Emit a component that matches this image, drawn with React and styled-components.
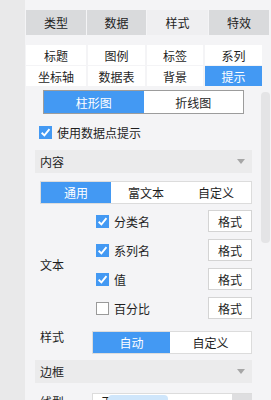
import React from 'react'
import styled, { createGlobalStyle } from 'styled-components'

const Global = createGlobalStyle`
  body {
    margin: 0;
    background: #f4f4f6;
    font-family: "Noto Sans CJK SC", "Microsoft YaHei", sans-serif;
    font-size: 12px;
    color: #1e1e1e;
  }
`

const Page = styled.div`
  display: flex;
  width: 271px;
  height: 400px;
  overflow: hidden;
`

const Strip = styled.div`
  width: 25px;
  flex-shrink: 0;
  background: #e9e9ea;
`

const Panel = styled.div`
  flex: 1;
  display: flex;
  flex-direction: column;
  background: #f4f4f6;
  & > * { flex-shrink: 0; }
`

const MainTabs = styled.div`
  display: grid;
  grid-template-columns: 60px 59px 61px 60px;
  gap: 1px;
  margin: 10px 0 0 1px;
  height: 25px;
`

const MainTab = styled.div`
  display: flex;
  align-items: center;
  justify-content: center;
  background: ${p => (p.active ? '#efeff1' : '#d9dadc')};
  font-size: 12px;
`

const SubTabs = styled.div`
  display: grid;
  grid-template-columns: 60px 57px 56px 57px;
  column-gap: 2px;
  row-gap: 1px;
  margin: 10px 0 0 1px;
  width: 235px;
`

const SubTab = styled.div`
  height: 20px;
  display: flex;
  align-items: center;
  justify-content: center;
  background: ${p => (p.active ? '#4399f3' : '#ffffff')};
  color: ${p => (p.active ? '#ffffff' : '#1e1e1e')};
`

const Body = styled.div`
  display: flex;
  padding-left: 10px;
`

const Content = styled.div`
  width: 217px;
  display: flex;
  flex-direction: column;
  & > * { flex-shrink: 0; }
`

const Scroll = styled.div`
  width: 9px;
  height: 151px;
  margin: 6px 0 0 9px;
  border-radius: 4px;
  background: #e4e4e6;
`

const Seg = styled.div`
  display: flex;
  flex: ${p => (p.grow ? 1 : 'none')};
  height: ${p => p.h || 20}px;
  border: 1px solid ${p => p.border || '#dcdcdc'};
  margin: ${p => p.m || 0};
  background: #fff;
`

const SegItem = styled.div`
  flex: ${p => (p.w ? `0 0 ${p.w}px` : 1)};
  display: flex;
  align-items: center;
  justify-content: center;
  background: ${p => (p.active ? '#4399f3' : '#ffffff')};
  color: ${p => (p.active ? '#ffffff' : '#1e1e1e')};
`

const CheckRow = styled.label`
  display: flex;
  align-items: center;
  gap: 5px;
  margin: ${p => p.m || 0};
  height: 14px;
`

const Box = styled.span`
  width: 13px;
  height: 13px;
  box-sizing: border-box;
  display: inline-flex;
  align-items: center;
  justify-content: center;
  background: ${p => (p.checked ? '#4399f3' : '#ffffff')};
  border: 1px solid ${p => (p.checked ? '#4399f3' : '#9a9a9a')};
`

const Section = styled.div`
  height: 23px;
  display: flex;
  align-items: center;
  justify-content: space-between;
  padding: 0 7px 0 5px;
  background: #ebebec;
  margin: ${p => p.m || 0};
`

const Caret = styled.span`
  width: 0;
  height: 0;
  border-left: 4px solid transparent;
  border-right: 4px solid transparent;
  border-top: 5px solid #a6a6a6;
`

const FormRow = styled.div`
  display: flex;
  align-items: ${p => p.align || 'center'};
  margin: ${p => p.m || 0};
`

const Label = styled.div`
  width: 57px;
  padding-left: 5px;
  box-sizing: border-box;
  flex-shrink: 0;
  line-height: ${p => (p.tight ? '12px' : 'normal')};
`

const Options = styled.div`
  flex: 1;
  display: flex;
  flex-direction: column;
  gap: 7px;
`

const Option = styled.div`
  display: flex;
  align-items: center;
  justify-content: space-between;
  padding-left: 4px;
`

const FmtButton = styled.div`
  width: 44px;
  height: 22px;
  box-sizing: border-box;
  border: 1px solid #d4d4d4;
  background: #fff;
  display: flex;
  align-items: center;
  justify-content: center;
`

const Select = styled.div`
  flex: 1;
  height: 22px;
  display: flex;
  background: #fff;
  border: 1px solid #dcdcdc;
  border-right: none;
  position: relative;
`

const SelectText = styled.div`
  padding: 0 0 0 8px;
  line-height: 16px;
  flex: 1;
`

const SelectBtn = styled.div`
  width: 20px;
  background: #dedee0;
`

const Hint = styled.div`
  position: absolute;
  left: 15px;
  top: 1px;
  width: 60px;
  height: 8px;
  border-radius: 4px 4px 0 0;
  background: #cfe6fb;
`

function Check({ checked }) {
  return (
    <Box checked={checked}>
      {checked && (
        <svg width="11" height="11" viewBox="0 0 10 10">
          <path d="M1.5 5.2 L4 7.6 L8.6 2" fill="none" stroke="#fff" strokeWidth="1.7" />
        </svg>
      )}
    </Box>
  )
}

export default function App() {
  const main = ['类型', '数据', '样式', '特效']
  const sub = ['标题', '图例', '标签', '系列', '坐标轴', '数据表', '背景', '提示']
  const opts = [
    { name: '分类名', on: true },
    { name: '系列名', on: true },
    { name: '值', on: true },
    { name: '百分比', on: false },
  ]

  return (
    <>
      <Global />
      <Page>
        <Strip />
        <Panel>
          <MainTabs>
            {main.map(t => (
              <MainTab key={t} active={t === '样式'}>{t}</MainTab>
            ))}
          </MainTabs>
          <SubTabs>
            {sub.map(t => (
              <SubTab key={t} active={t === '提示'}>{t}</SubTab>
            ))}
          </SubTabs>
          <Body>
            <Content>
              <Seg h={22} border="#9c9c9c" m="4px 8px 0 8px">
                <SegItem active>柱形图</SegItem>
                <SegItem>折线图</SegItem>
              </Seg>
              <CheckRow m="11px 0 0 4px">
                <Check checked />
                使用数据点提示
              </CheckRow>
              <Section m="11px 0 0 0">
                内容
                <Caret />
              </Section>
              <Seg h={21} m="8px 0 0 5px">
                <SegItem active w={70}>通用</SegItem>
                <SegItem>富文本</SegItem>
                <SegItem>自定义</SegItem>
              </Seg>
              <FormRow m="6px 0 0 0">
                <Label>文本</Label>
                <Options>
                  {opts.map(o => (
                    <Option key={o.name}>
                      <CheckRow>
                        <Check checked={o.on} />
                        {o.name}
                      </CheckRow>
                      <FmtButton>格式</FmtButton>
                    </Option>
                  ))}
                </Options>
              </FormRow>
              <FormRow m="12px 0 0 0" align="flex-start">
                <Label tight>样式</Label>
                <Seg h={21} grow>
                  <SegItem active w={77}>自动</SegItem>
                  <SegItem>自定义</SegItem>
                </Seg>
              </FormRow>
              <Section m="6px 0 0 0">
                边框
                <Caret />
              </Section>
              <FormRow m="10px 0 0 0" align="flex-start">
                <Label>线型</Label>
                <Select>
                  <SelectText>无</SelectText>
                  <Hint />
                  <SelectBtn />
                </Select>
              </FormRow>
            </Content>
            <Scroll />
          </Body>
        </Panel>
      </Page>
    </>
  )
}
